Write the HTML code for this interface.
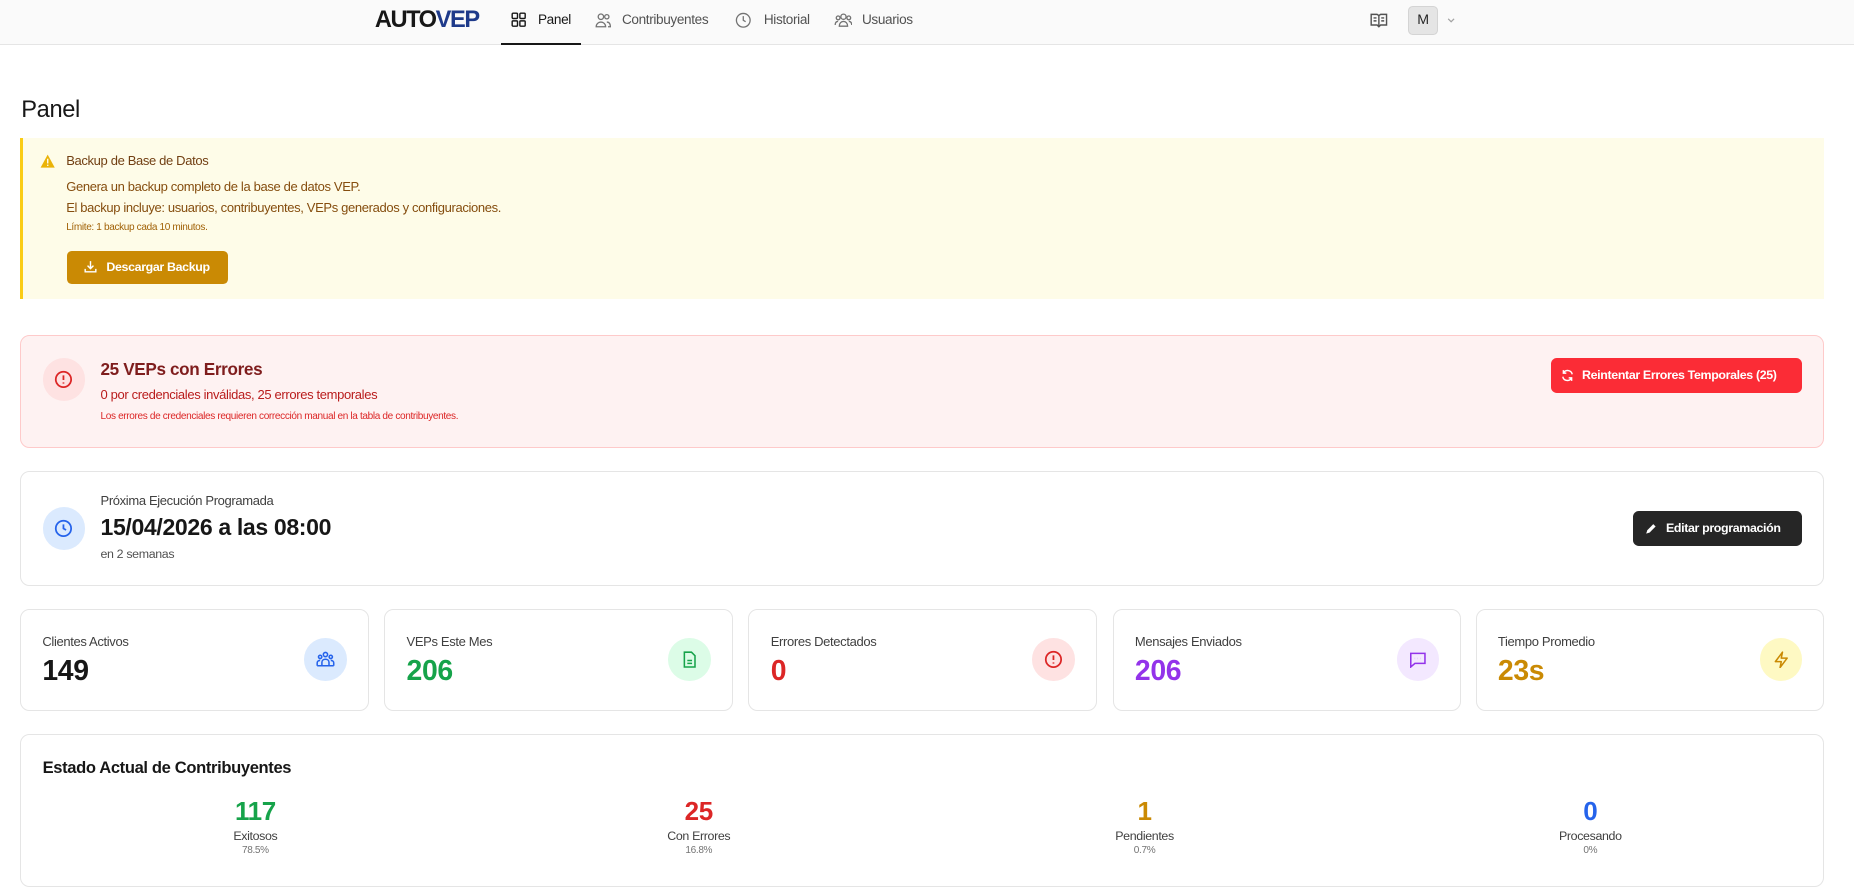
<!DOCTYPE html>
<html><head><meta charset="utf-8"><style>
*{box-sizing:border-box;margin:0;padding:0}
html,body{width:1854px;height:895px;overflow:hidden;background:#fff}
#w{zoom:1.1824;width:1568px;height:757px;position:relative;font-family:"Liberation Sans",sans-serif;color:#171717;letter-spacing:-0.3px}
.a{position:absolute;white-space:nowrap}
.hdr{left:0;top:0;width:1568px;height:38px;background:#fafafa;border-bottom:1px solid #e5e5e5}
.nav{font-size:11.5px;color:#525252;top:10px}
.box{position:absolute;left:17px;width:1526px;border-radius:8px}
.card{position:absolute;top:515px;width:295px;height:86px;border:1px solid #e5e5e5;border-radius:8px;background:#fff}
.card .l{position:absolute;left:18px;top:20px;font-size:11px;color:#404040}
.card .v{position:absolute;left:18px;top:38px;font-size:24px;font-weight:bold}
.card .c{position:absolute;right:18px;top:24px;width:36px;height:36px;border-radius:50%;display:flex;align-items:center;justify-content:center}
.col{position:absolute;top:673px;width:200px;text-align:center}
.col .n{font-size:22px;font-weight:bold}
.col .t{font-size:10.5px;color:#404040;margin-top:2px}
.col .p{font-size:8.5px;color:#737373;margin-top:2px}
</style></head><body><div id="w">
<div class="a hdr"></div>
<div class="a" style="left:317px;top:6px;font-size:20px;font-weight:900;letter-spacing:-1.2px">AUTO<span style="color:#1e3a8a">VEP</span></div>
<svg class="a" style="left:432px;top:10px" width="13" height="13" viewBox="0 0 13 13" fill="none" stroke="#171717" stroke-width="1.2"><rect x="1" y="1" width="4.5" height="4.5" rx=".8"/><rect x="7.5" y="1" width="4.5" height="4.5" rx=".8"/><rect x="1" y="7.5" width="4.5" height="4.5" rx=".8"/><rect x="7.5" y="7.5" width="4.5" height="4.5" rx=".8"/></svg>
<div class="a nav" style="left:455px;color:#171717">Panel</div>
<div class="a" style="left:424px;top:36px;width:67px;height:2px;background:#171717"></div>
<svg class="a" style="left:503px;top:10px" width="14" height="14" viewBox="0 0 14 14" fill="none" stroke="#737373" stroke-width="1.1"><circle cx="5" cy="4" r="2.3"/><path d="M1 12.5c0-2.5 2-4 4-4s4 1.5 4 4z"/><circle cx="10" cy="4" r="1.8"/><path d="M10 8.5c2 0 3 1.5 3 4h-2"/></svg>
<div class="a nav" style="left:526px">Contribuyentes</div>
<svg class="a" style="left:622px;top:10px" width="14" height="14" viewBox="0 0 14 14" fill="none" stroke="#737373" stroke-width="1.1"><circle cx="7" cy="7" r="5.8"/><path d="M7 3.5V7l2 1.2"/></svg>
<div class="a nav" style="left:646px">Historial</div>
<svg class="a" style="left:705px;top:10px" width="16" height="14" viewBox="0 0 16 14" fill="none" stroke="#737373" stroke-width="1.1"><circle cx="8" cy="4" r="2.2"/><circle cx="3.5" cy="5" r="1.6"/><circle cx="12.5" cy="5" r="1.6"/><path d="M4.5 12c0-2.5 1.5-4 3.5-4s3.5 1.5 3.5 4zM1 11c0-2 1-3 2.5-3M15 11c0-2-1-3-2.5-3"/></svg>
<div class="a nav" style="left:729px">Usuarios</div>
<svg class="a" style="left:1159px;top:10px" width="15" height="14" viewBox="0 0 15 14" fill="none" stroke="#525252" stroke-width="1.2"><path d="M1 2h5l1.5 1 1.5-1h5v9H9l-1.5 1.5L6 11H1z"/><path d="M7.5 3v9M3 5h2.5M3 7.5h2.5M9.5 5H12M9.5 7.5H12"/></svg>
<div class="a" style="left:1191px;top:5px;width:25px;height:25px;border-radius:4px;background:#e5e5e5;border:1px solid #d4d4d4;font-size:12px;text-align:center;line-height:23px;color:#262626">M</div>
<svg class="a" style="left:1224px;top:14px" width="7" height="6" viewBox="0 0 7 6" fill="none" stroke="#a3a3a3" stroke-width="1"><path d="M1 1.5l2.5 2.5L6 1.5"/></svg>

<div class="a" style="left:18px;top:82px;font-size:20px;color:#171717">Panel</div>

<div class="box" style="top:117px;height:136px;background:#fefce8;border-left:3px solid #facc15;border-radius:0"></div>
<svg class="a" style="left:34px;top:130px" width="13" height="12" viewBox="0 0 13 12"><path d="M6.5 0.5L12.5 11.5H0.5z" fill="#eab308"/><rect x="6" y="4" width="1.1" height="4" fill="#fff"/><rect x="6" y="9" width="1.1" height="1.1" fill="#fff"/></svg>
<div class="a" style="left:56px;top:129px;font-size:11px;color:#713f12">Backup de Base de Datos</div>
<div class="a" style="left:56px;top:151px;font-size:11px;color:#854d0e">Genera un backup completo de la base de datos VEP.</div>
<div class="a" style="left:56px;top:169px;font-size:11px;color:#854d0e">El backup incluye: usuarios, contribuyentes, VEPs generados y configuraciones.</div>
<div class="a" style="left:56px;top:188px;font-size:8.5px;color:#a16207">Límite: 1 backup cada 10 minutos.</div>
<div class="a" style="left:57px;top:212px;width:136px;height:28px;background:#ca8a04;border-radius:4px;color:#fff;font-size:10.5px;font-weight:bold;line-height:28px;padding-left:33px">Descargar Backup</div>
<svg class="a" style="left:71px;top:220px" width="11" height="11" viewBox="0 0 11 11" fill="none" stroke="#fff" stroke-width="1.2"><path d="M5.5 1v6M3 4.8l2.5 2.5L8 4.8M1 7.5V10h9V7.5"/></svg>

<div class="box" style="top:283px;height:96px;background:#fef2f2;border:1px solid #fecaca"></div>
<div class="a" style="left:36px;top:303px;width:36px;height:36px;border-radius:50%;background:#fee2e2"></div>
<svg class="a" style="left:46px;top:313px" width="16" height="16" viewBox="0 0 16 16" fill="none" stroke="#dc2626" stroke-width="1.5"><circle cx="8" cy="8" r="6.5"/><path d="M8 4.5v4M8 10.5v1"/></svg>
<div class="a" style="left:85px;top:304px;font-size:14.5px;font-weight:bold;color:#7f1d1d">25 VEPs con Errores</div>
<div class="a" style="left:85px;top:327px;font-size:11px;color:#b91c1c">0 por credenciales inválidas, 25 errores temporales</div>
<div class="a" style="left:85px;top:348px;font-size:8.5px;color:#dc2626">Los errores de credenciales requieren corrección manual en la tabla de contribuyentes.</div>
<div class="a" style="left:1312px;top:303px;width:212px;height:29px;background:#fb2c36;border-radius:5px;color:#fff;font-size:10.5px;font-weight:bold;line-height:29px;padding-left:26px">Reintentar Errores Temporales (25)</div>
<svg class="a" style="left:1320px;top:312px" width="11" height="11" viewBox="0 0 11 11" fill="none" stroke="#fff" stroke-width="1.2"><path d="M9.5 4.5A4 4 0 0 0 2 3.5M1.5 6.5A4 4 0 0 0 9 7.5M2 1v2.5h2.5M9 10V7.5H6.5"/></svg>

<div class="box" style="top:398px;height:98px;background:#fff;border:1px solid #e5e5e5"></div>
<div class="a" style="left:36px;top:429px;width:36px;height:36px;border-radius:50%;background:#dbeafe"></div>
<svg class="a" style="left:46px;top:439px" width="16" height="16" viewBox="0 0 16 16" fill="none" stroke="#2563eb" stroke-width="1.5"><circle cx="8" cy="8" r="6.5"/><path d="M8 4.5V8l2.2 1.3"/></svg>
<div class="a" style="left:85px;top:417px;font-size:11px;color:#404040">Próxima Ejecución Programada</div>
<div class="a" style="left:85px;top:435px;font-size:19.5px;font-weight:bold;color:#171717">15/04/2026 a las 08:00</div>
<div class="a" style="left:85px;top:463px;font-size:10.5px;color:#525252">en 2 semanas</div>
<div class="a" style="left:1381px;top:432px;width:143px;height:30px;background:#262626;border-radius:5px;color:#fff;font-size:10.5px;font-weight:bold;line-height:30px;padding-left:28px">Editar programación</div>
<svg class="a" style="left:1391px;top:442px" width="10" height="10" viewBox="0 0 10 10"><path d="M1 9l1-3 5-5 2 2-5 5z" fill="#fff"/></svg>

<div class="card" style="left:17px"><div class="l">Clientes Activos</div><div class="v">149</div><div class="c" style="background:#dbeafe"><svg width="16" height="14" viewBox="0 0 16 14" fill="none" stroke="#2563eb" stroke-width="1.3"><circle cx="8" cy="3" r="1.8"/><circle cx="3.5" cy="5" r="1.4"/><circle cx="12.5" cy="5" r="1.4"/><path d="M5 12.5V9.5c0-1.5 1.3-2.5 3-2.5s3 1 3 2.5v3zM1 12.5V10c0-1 .8-2 2.5-2M15 12.5V10c0-1-.8-2-2.5-2M1 12.5h14"/></svg></div></div>
<div class="card" style="left:325px"><div class="l">VEPs Este Mes</div><div class="v" style="color:#16a34a">206</div><div class="c" style="background:#dcfce7"><svg width="13" height="15" viewBox="0 0 13 15" fill="none" stroke="#16a34a" stroke-width="1.3"><path d="M2 1h6l3 3v9.5H2z"/><path d="M4.5 8h4M4.5 10.5h4"/></svg></div></div>
<div class="card" style="left:633px"><div class="l">Errores Detectados</div><div class="v" style="color:#dc2626">0</div><div class="c" style="background:#fee2e2"><svg width="16" height="16" viewBox="0 0 16 16" fill="none" stroke="#dc2626" stroke-width="1.5"><circle cx="8" cy="8" r="6.5"/><path d="M8 4.5v4M8 10.5v1"/></svg></div></div>
<div class="card" style="left:941px"><div class="l">Mensajes Enviados</div><div class="v" style="color:#9333ea">206</div><div class="c" style="background:#f3e8ff"><svg width="15" height="15" viewBox="0 0 15 15" fill="none" stroke="#9333ea" stroke-width="1.3"><path d="M1.5 2h12v8.5H5L1.5 13.5z"/><path d="M5 6.3h.1M7.5 6.3h.1M10 6.3h.1"/></svg></div></div>
<div class="card" style="left:1248px"><div class="l">Tiempo Promedio</div><div class="v" style="color:#ca8a04">23s</div><div class="c" style="background:#fef9c3"><svg width="14" height="15" viewBox="0 0 14 15" fill="none" stroke="#ca8a04" stroke-width="1.3" stroke-linejoin="round"><path d="M8 1L2 9h5l-1 5 6-8H7z"/></svg></div></div>

<div class="box" style="top:621px;height:129px;background:#fff;border:1px solid #e5e5e5"></div>
<div class="a" style="left:36px;top:641px;font-size:14px;font-weight:bold;color:#171717">Estado Actual de Contribuyentes</div>
<div class="col" style="left:116px"><div class="n" style="color:#16a34a">117</div><div class="t">Exitosos</div><div class="p">78.5%</div></div>
<div class="col" style="left:491px"><div class="n" style="color:#dc2626">25</div><div class="t">Con Errores</div><div class="p">16.8%</div></div>
<div class="col" style="left:868px"><div class="n" style="color:#ca8a04">1</div><div class="t">Pendientes</div><div class="p">0.7%</div></div>
<div class="col" style="left:1245px"><div class="n" style="color:#2563eb">0</div><div class="t">Procesando</div><div class="p">0%</div></div>
</div></body></html>
